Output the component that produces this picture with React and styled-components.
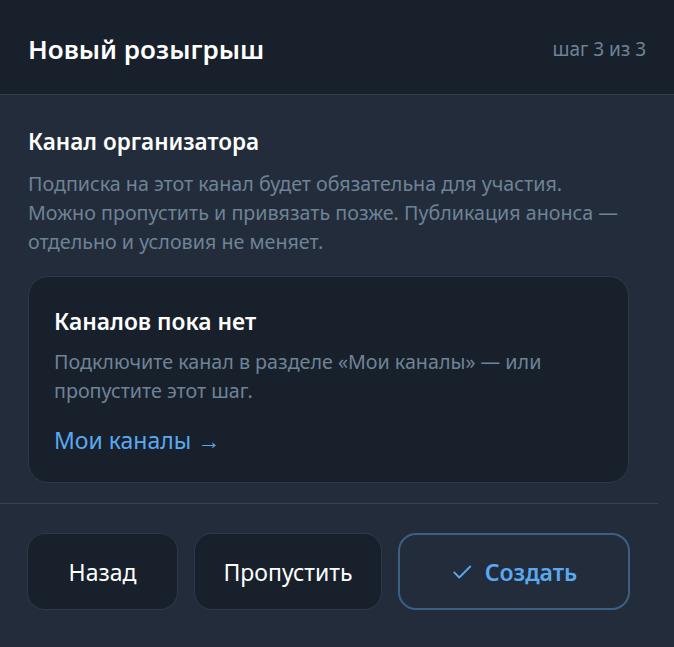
import React from "react"
import styled, { createGlobalStyle } from "styled-components"

const GlobalStyle = createGlobalStyle`
  html, body {
    margin: 0;
    padding: 0;
    background: #222c3a;
  }
  body {
    font-family: "Noto Sans", "Open Sans", sans-serif;
    color: #ffffff;
  }
  * {
    box-sizing: border-box;
  }
`

const Screen = styled.div`
  width: 674px;
  min-height: 647px;
  background: #222c3a;
  display: flex;
  flex-direction: column;
`

const Header = styled.header`
  height: 95px;
  background: #18202b;
  border-bottom: 1px solid #333e4c;
  display: flex;
  align-items: center;
  justify-content: space-between;
  padding: 4px 28px 0 28px;
`

const Title = styled.h1`
  margin: 0;
  font-size: 26px;
  font-weight: 600;
  color: #ffffff;
`

const Step = styled.span`
  font-size: 19px;
  color: #6f8397;
`

const Body = styled.section`
  padding: 32px 45px 20px 28px;
`

const SectionTitle = styled.h2`
  margin: 0 0 12px;
  font-size: 22.5px;
  line-height: 30px;
  font-weight: 600;
  color: #ffffff;
`

const Muted = styled.p`
  margin: 0;
  font-size: 19.7px;
  line-height: 29px;
  color: #6f8397;
`

const Card = styled.div`
  margin-top: 20px;
  background: #18202b;
  border: 1px solid #2d3948;
  border-radius: 20px;
  padding: 30px 25px 27px;
`

const CardTitle = styled.h3`
  margin: 0 0 10px;
  font-size: 22.8px;
  line-height: 30px;
  font-weight: 600;
  color: #ffffff;
`

const Link = styled.a`
  display: inline-block;
  margin-top: 20px;
  font-size: 23px;
  line-height: 30px;
  color: #5aa9f0;
  text-decoration: none;
`

const Divider = styled.hr`
  margin: 0 16px 0 0;
  border: 0;
  border-top: 1px solid #364252;
`

const Footer = styled.div`
  display: flex;
  gap: 16px;
  padding: 29px 42px 0 27px;
`

const Button = styled.button`
  height: 77px;
  width: ${(p) => p.$w}px;
  border-radius: 18px;
  font-family: inherit;
  font-size: 23px;
  display: flex;
  align-items: center;
  justify-content: center;
  gap: 12px;
  cursor: pointer;
  background: ${(p) => (p.$primary ? "transparent" : "#18202b")};
  border: ${(p) => (p.$primary ? "2px solid #3d5f83" : "1px solid #2d3948")};
  color: ${(p) => (p.$primary ? "#5aa9f0" : "#ffffff")};
  font-weight: ${(p) => (p.$primary ? 600 : 400)};
`

const Check = () => (
  <svg width="22" height="22" viewBox="0 0 24 24" fill="none">
    <path
      d="M3.5 12.5l5.5 5.5L21 6"
      stroke="#5aa9f0"
      strokeWidth="2"
      strokeLinecap="round"
      strokeLinejoin="round"
    />
  </svg>
)

const App = () => {
  return (
    <Screen>
      <GlobalStyle />
      <Header>
        <Title>Новый розыгрыш</Title>
        <Step>шаг 3 из 3</Step>
      </Header>
      <Body>
        <SectionTitle>Канал организатора</SectionTitle>
        <Muted>
          Подписка на этот канал будет обязательна для участия.
          <br />
          Можно пропустить и привязать позже. Публикация анонса —
          <br />
          отдельно и условия не меняет.
        </Muted>
        <Card>
          <CardTitle>Каналов пока нет</CardTitle>
          <Muted>
            Подключите канал в разделе «Мои каналы» — или
            <br />
            пропустите этот шаг.
          </Muted>
          <Link href='#'>Мои каналы →</Link>
        </Card>
      </Body>
      <Divider />
      <Footer>
        <Button $w={151}>Назад</Button>
        <Button $w={188}>Пропустить</Button>
        <Button $w={232} $primary>
          <Check />
          Создать
        </Button>
      </Footer>
    </Screen>
  )
}

export default App
